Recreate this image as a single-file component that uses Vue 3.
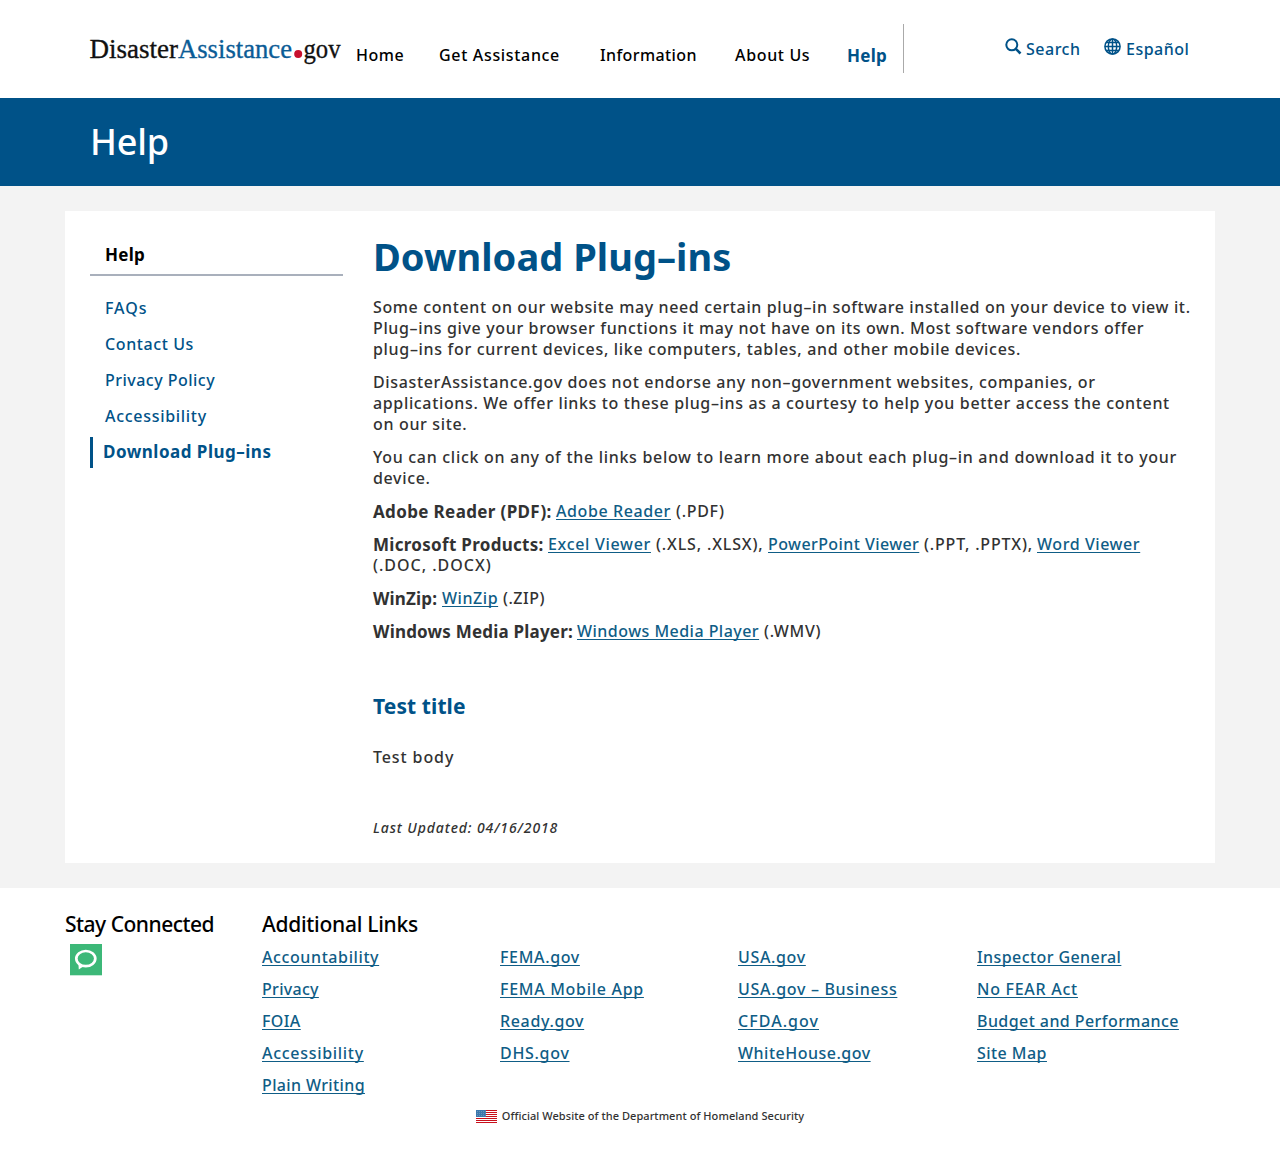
<script setup>
const nav = [
  { t: 'Home', s: 0.5 },
  { t: 'Get Assistance', s: 0.67 },
  { t: 'Information', s: 0.4 },
  { t: 'About Us', s: 0.65 },
  { t: 'Help', s: 0.3, active: true },
]
const side = [
  { t: 'FAQs', s: 0.95 },
  { t: 'Contact Us', s: 0.6 },
  { t: 'Privacy Policy', s: 0.48 },
  { t: 'Accessibility', s: 0.7 },
  { t: 'Download Plug–ins', s: 0.5, active: true },
]
const paragraphs = [
  [
    { t: 'Some content on our website may need certain plug–in software installed on your device to view it.', s: 0.625 },
    { t: 'Plug–ins give your browser functions it may not have on its own. Most software vendors offer', s: 0.635 },
    { t: 'plug–ins for current devices, like computers, tables, and other mobile devices.', s: 0.68 },
  ],
  [
    { t: 'DisasterAssistance.gov does not endorse any non–government websites, companies, or', s: 0.65 },
    { t: 'applications. We offer links to these plug–ins as a courtesy to help you better access the content', s: 0.645 },
    { t: 'on our site.', s: 0.66 },
  ],
  [
    { t: 'You can click on any of the links below to learn more about each plug–in and download it to your', s: 0.7 },
    { t: 'device.', s: 0.66 },
  ],
]
const products = [
  [[{ k: 'b', t: 'Adobe Reader (PDF):', s: 0.36, w: 183 }, { k: 'a', t: 'Adobe Reader', s: 0.6, w: 120 }, { t: '(.PDF)', s: 0.7 }]],
  [
    [
      { k: 'b', t: 'Microsoft Products:', s: 0.3, w: 175 },
      { k: 'a', t: 'Excel Viewer', s: 0.69, w: 108 },
      { t: '(.XLS, .XLSX),', s: 0.85, w: 112 },
      { k: 'a', t: 'PowerPoint Viewer', s: 0.42, w: 156 },
      { t: '(.PPT, .PPTX),', s: 0.82, w: 113 },
      { k: 'a', t: 'Word Viewer', s: 0.57 },
    ],
    [{ t: '(.DOC, .DOCX)', s: 1 }],
  ],
  [[{ k: 'b', t: 'WinZip:', s: 0.15, w: 69 }, { k: 'a', t: 'WinZip', s: 0.55, w: 61 }, { t: '(.ZIP)', s: 0.5 }]],
  [[{ k: 'b', t: 'Windows Media Player:', s: 0.2, w: 204 }, { k: 'a', t: 'Windows Media Player', s: 0.47, w: 187 }, { t: '(.WMV)', s: 0.7 }]],
]
const links = [
  [{ t: 'Accountability', s: 0.6 }, { t: 'Privacy', s: 0.3 }, { t: 'FOIA', s: 0.4 }, { t: 'Accessibility', s: 0.7 }, { t: 'Plain Writing', s: 0.37 }],
  [{ t: 'FEMA.gov', s: 0.65 }, { t: 'FEMA Mobile App', s: 0.7 }, { t: 'Ready.gov', s: 0.65 }, { t: 'DHS.gov', s: 0.7 }],
  [{ t: 'USA.gov', s: 0.65 }, { t: 'USA.gov – Business', s: 0.69 }, { t: 'CFDA.gov', s: 1.05 }, { t: 'WhiteHouse.gov', s: 0.5 }],
  [{ t: 'Inspector General', s: 0.42 }, { t: 'No FEAR Act', s: 0.73 }, { t: 'Budget and Performance', s: 0.43 }, { t: 'Site Map', s: 0.45 }],
]
const ls = (s) => ({ letterSpacing: s + 'px' })
</script>

<template>
  <div class="page">
    <header class="header">
      <svg class="logo" width="254" height="40" viewBox="0 0 254 40">
        <g stroke-width=".35">
          <text x="-.5" y="27" textLength="88.500" lengthAdjust="spacingAndGlyphs" fill="#111" stroke="#111">Disaster</text>
          <text x="88" y="27" textLength="114" lengthAdjust="spacingAndGlyphs" fill="#0b5c96" stroke="#0b5c96">Assistance</text>
          <text x="213.500" y="27" textLength="37" lengthAdjust="spacingAndGlyphs" fill="#111" stroke="#111">gov</text>
        </g>
        <circle cx="208.200" cy="23" r="4" fill="#c8102e" />
      </svg>
      <nav class="nav">
        <a v-for="n in nav" :key="n.t" :class="{ active: n.active }" :style="ls(n.s)">{{ n.t }}</a>
      </nav>
      <div class="tools">
        <a class="tool search">
          <svg width="17" height="17" viewBox="0 0 17 17"><circle cx="6.800" cy="6.800" r="5.500" fill="none" stroke="#005288" stroke-width="2" /><path d="M10.800 10.800L15.500 15.500" stroke="#005288" stroke-width="2.600" /></svg>
          <span>Search</span>
        </a>
        <a class="tool">
          <svg width="17" height="17" viewBox="0 0 17 17" fill="none" stroke="#005288" stroke-width="1.500"><circle cx="8.500" cy="8.500" r="7.600" /><ellipse cx="8.500" cy="8.500" rx="4.200" ry="7.600" /><path d="M8.500 1V16M1 8.500H16M2.200 4.600H14.800M2.200 12.400H14.800" /></svg>
          <span class="lang">Español</span>
        </a>
      </div>
    </header>
    <div class="banner"><span>Help</span></div>
    <main class="main">
      <div class="card">
        <aside class="side">
          <h2>Help</h2>
          <a v-for="i in side" :key="i.t" :class="{ active: i.active }" :style="ls(i.s)">{{ i.t }}</a>
        </aside>
        <article class="article">
          <h1>Download Plug–ins</h1>
          <p v-for="(p, i) in paragraphs" :key="i">
            <span v-for="l in p" :key="l.t" class="line" :style="ls(l.s)">{{ l.t }}</span>
          </p>
          <p v-for="(p, i) in products" :key="'p' + i">
            <span v-for="(l, j) in p" :key="j" class="line parts">
              <span v-for="x in l" :key="x.t" :style="{ width: x.w ? x.w + 'px' : 'auto' }"><component :is="x.k || 'span'" :style="ls(x.s)">{{ x.t }}</component></span>
            </span>
          </p>
          <h3>Test title</h3>
          <p class="body">Test body</p>
          <p class="updated">Last Updated: 04/16/2018</p>
        </article>
      </div>
    </main>
    <footer class="footer">
      <div class="cols">
        <section class="stay">
          <h4>Stay Connected</h4>
          <svg width="32" height="32" viewBox="0 0 32 32"><rect width="32" height="31.300" fill="#3cb878" /><ellipse cx="15.800" cy="14.600" rx="9.500" ry="7.600" fill="none" stroke="#fff" stroke-width="2.700" /><path d="M8.300 18.500L8.800 25.500L14 22z" fill="#fff" /></svg>
        </section>
        <section>
          <h4 class="add">Additional Links</h4>
          <div class="links">
            <div v-for="(c, i) in links" :key="i" class="col">
              <div v-for="l in c" :key="l.t"><a :style="ls(l.s)">{{ l.t }}</a></div>
            </div>
          </div>
        </section>
      </div>
      <div class="official">
        <svg width="21" height="13" viewBox="0 0 21 13"><rect width="21" height="13" fill="#fff" /><path d="M0 .5H21M0 2.500H21M0 4.500H21M0 6.500H21M0 8.500H21M0 10.500H21M0 12.500H21" stroke="#c8101c" /><rect width="10" height="7" fill="#3b78ad" /><path d="M1 1.500H10M1 3.500H10M1 5.500H10" stroke="#6b91b8" stroke-dasharray="1 1" /></svg>
        <span>Official Website of the Department of Homeland Security</span>
      </div>
    </footer>
  </div>
</template>

<style>
body { margin: 0; background: #fff; }
</style>
<style scoped>
.page { font: 500 16px/21px "Noto Sans", "Open Sans", sans-serif; color: #323232; width: 1280px; height: 1163px; overflow: hidden; }
h1, h2, h3, h4, p { margin: 0; }
a { color: #005288; white-space: nowrap; }
b { font-size: 17px; }
.header { display: flex; height: 98px; padding-left: 90px; }
.logo { margin-top: 31px; flex: none; font: 28px "Liberation Serif", serif; overflow: visible; }
.nav { display: grid; grid-template-columns: 83px 161px 135px 112px 56px; margin: 24px 0 0 12px; height: 49px; border-right: 1px solid #aaa; padding-top: 21px; box-sizing: border-box; }
.nav a { color: #000; }
.nav .active { color: #005288; font-weight: 700; font-size: 17px; }
.tools { display: flex; margin: 38px 0 0 101px; }
.tool { display: flex; letter-spacing: .5px; }
.tool svg { margin-right: 4px; }
.tool span { margin-top: 1px; }
.tool .lang { margin-left: 1px; }
.search { width: 99px; }
.banner { height: 88px; background: #005288; color: #fff; font-size: 36px; line-height: 88px; padding-left: 90px; letter-spacing: -.2px; }
.main { background: #f3f3f3; padding: 25px 65px; height: 652px; }
.card { background: #fff; height: 652px; display: flex; padding: 0 25px; }
.side { width: 253px; margin-right: 30px; flex: none; }
.side h2 { font-size: 17px; line-height: 21px; color: #000; padding: 33px 15px 9px; border-bottom: 2px solid #a9b0bc; letter-spacing: .3px; margin-bottom: 17px; }
.side a { display: block; height: 31px; line-height: 31px; margin-bottom: 5px; padding-left: 15px; }
.side .active { border-left: 3px solid #005288; padding-left: 10px; font-weight: 700; font-size: 17px; line-height: 30px; }
.article { flex: none; width: 817px; }
.article h1 { font-size: 38px; line-height: 44px; color: #005288; letter-spacing: .05px; margin: 23px 0 19px; white-space: nowrap; }
.article p { margin-bottom: 12px; white-space: nowrap; }
.line { display: block; height: 21px; }
.parts { display: flex; }
.parts > span { flex: none; }
.parts a, .footer a { color: #0f5d86; text-decoration: underline; text-decoration-thickness: 1px; text-underline-offset: 2px; text-decoration-skip-ink: none; }
.article h3 { font-size: 21px; line-height: 28px; color: #005288; letter-spacing: .1px; margin: 50px 0 27px; }
.article .body { letter-spacing: .9px; margin-bottom: 49px; }
.article .updated { font-size: 14px; font-style: italic; letter-spacing: .9px; }
.footer { padding: 22px 65px 0; }
.cols { display: flex; height: 199px; }
.stay { width: 197px; }
.stay svg { display: block; margin: 6px 0 0 5px; }
.footer h4 { font-size: 21px; line-height: 28px; font-weight: 500; color: #000; letter-spacing: -.5px; white-space: nowrap; }
.footer .add { letter-spacing: -.28px; }
.links { display: grid; grid-template-columns: 238px 238px 239px 210px; margin-top: 3px; }
.col > div { height: 32px; line-height: 32px; }
.official { display: flex; justify-content: center; align-items: center; height: 14px; font-size: 11px; line-height: 14px; gap: 5px; letter-spacing: .06px; }
</style>
